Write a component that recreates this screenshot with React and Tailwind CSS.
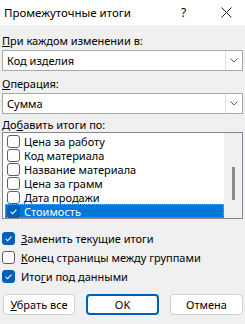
import React from 'react';

const font = { fontFamily: '"Noto Sans", "Open Sans", sans-serif' };

const Check = ({ className = '' }) => (
  <svg viewBox="0 0 13 13" className={className}>
    <path d="M3 6.8 L5.4 9.1 L10 4.2" fill="none" stroke="white" strokeWidth="1.2" />
  </svg>
);

const Box = ({ checked, onBlue }) => (
  <span
    className={`flex h-[13px] w-[13px] shrink-0 items-center justify-center rounded-[3px] border ${
      checked ? 'border-[#005fb8] bg-[#005fb8]' : 'border-[#5f5f5f] bg-white'
    } ${onBlue ? 'border-[#1c2e4a]' : ''}`}
  >
    {checked && <Check className="h-[13px] w-[13px]" />}
  </span>
);

const Select = ({ value }) => (
  <div className="mx-[1px] flex h-[21px] border border-[#a8a8a8] bg-white">
    <div className="flex flex-1 items-center pl-[4px] text-black">{value}</div>
    <div className="flex w-[17px] items-center justify-center border-l border-[#e0e0e0]">
      <svg viewBox="0 0 8 5" className="h-[5px] w-[8px]">
        <path d="M0.5 0.5 L4 4 L7.5 0.5" fill="none" stroke="#606060" strokeWidth="1" />
      </svg>
    </div>
  </div>
);

const items = ['Цена за работу', 'Код материала', 'Название материала', 'Цена за грамм', 'Дата продажи', 'Стоимость'];

export default function App() {
  return (
    <div className="flex h-[324px] w-[245px] flex-col bg-[#f0f0f0] text-[11px] leading-none text-black" style={font}>
      <div className="flex h-[25px] items-center bg-white pl-[4px]">
        <span className="flex-1 text-[11.5px]">Промежуточные итоги</span>
        <span className="w-[40px] text-[12px]">?</span>
        <svg viewBox="0 0 11 11" className="mr-[13px] h-[11px] w-[11px]">
          <path d="M0.5 0.5 L10.5 10.5 M10.5 0.5 L0.5 10.5" stroke="#222" strokeWidth="1" />
        </svg>
      </div>

      <div className="flex flex-col px-[1px]">
        <div className="mt-[10px] mb-[4px] pl-[1px]"><u>П</u>ри каждом изменении в:</div>
        <Select value="Код изделия" />
        <div className="mt-[7px] mb-[4px] pl-[1px]"><u>О</u>перация:</div>
        <Select value="Сумма" />
        <div className="mt-[5px] mb-[2px] pl-[1px]">До<u>б</u>авить итоги по:</div>

        <div className="mx-[1px] flex h-[87px] border border-[#828790] bg-white">
          <div className="flex flex-1 flex-col pl-[2px] pt-[1px]">
            {items.map((t, i) => {
              const sel = i === items.length - 1;
              return (
                <div
                  key={t}
                  className={`flex h-[14px] items-center gap-[4px] pl-[1px] ${
                    sel ? 'border border-dotted border-[#f08a24] bg-[#0078d7] text-white' : 'border border-transparent'
                  }`}
                >
                  <Box checked={sel} onBlue={sel} />
                  <span>{t}</span>
                </div>
              );
            })}
          </div>
          <div className="flex w-[18px] justify-center bg-[#f0f0f0] pt-[34px]">
            <div className="h-[33px] w-[3px] bg-[#8a8a8a]"></div>
          </div>
        </div>

        <div className="mt-[13px] flex flex-col gap-[6px] pl-[1px]">
          <label className="flex h-[13px] items-center gap-[6px]"><Box checked /><span><u>З</u>аменить текущие итоги</span></label>
          <label className="flex h-[13px] items-center gap-[6px]"><Box /><span><u>К</u>онец страницы между группами</span></label>
          <label className="flex h-[13px] items-center gap-[6px]"><Box checked /><span>Ито<u>г</u>и под данными</span></label>
        </div>

        <div className="mt-[11px] flex gap-[11px] pl-[2px]">
          <button className="h-[21px] w-[72px] rounded-[4px] border border-[#d0d0d0] bg-white text-[11px]"><u>У</u>брать все</button>
          <button className="h-[21px] w-[73px] rounded-[4px] border-2 border-[#005fb8] bg-white text-[11px]">OK</button>
          <button className="h-[21px] w-[73px] rounded-[4px] border border-[#d0d0d0] bg-white text-[11px]">Отмена</button>
        </div>
      </div>
    </div>
  );
}
